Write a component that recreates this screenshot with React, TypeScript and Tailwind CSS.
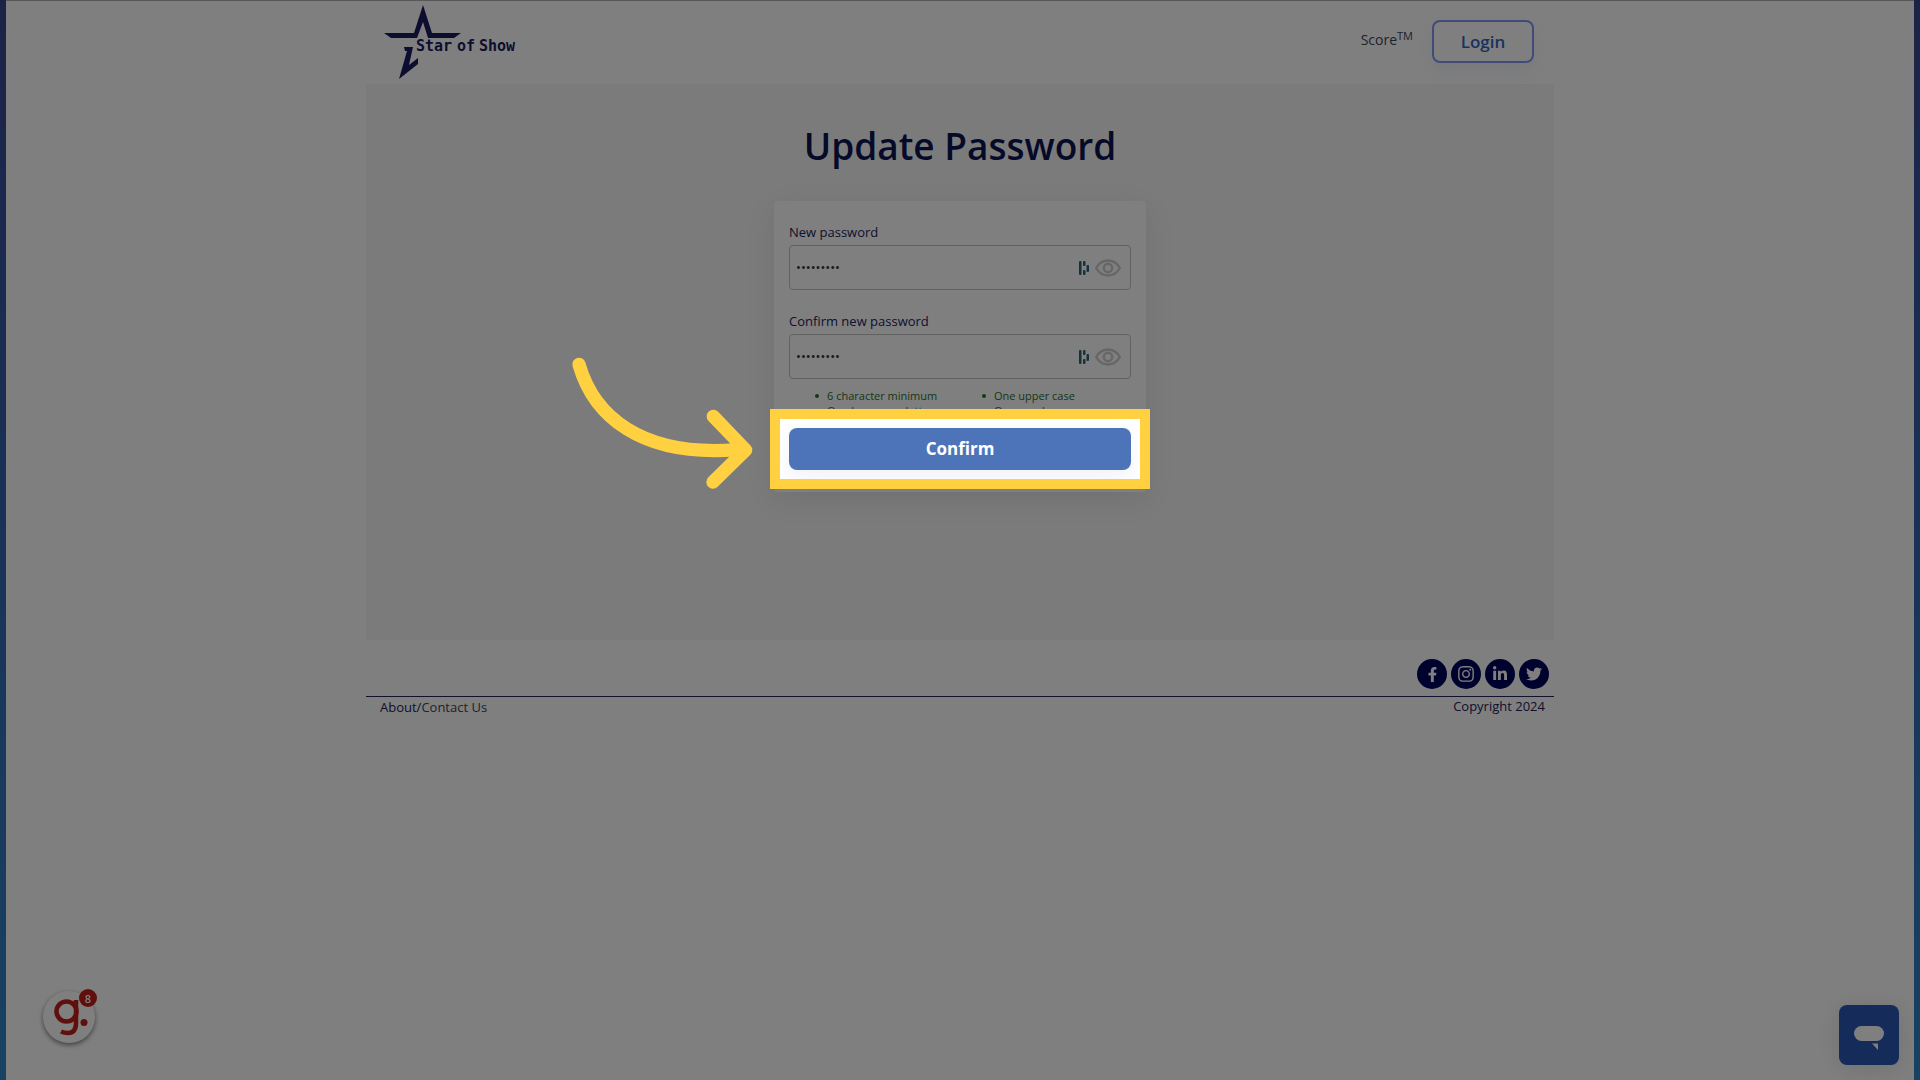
import { useState } from "react";
import { FaFacebookF, FaInstagram, FaLinkedinIn, FaTwitter } from "react-icons/fa";

const socials = [
  { label: "Facebook", Icon: FaFacebookF, size: 15 },
  { label: "Instagram", Icon: FaInstagram, size: 18 },
  { label: "LinkedIn", Icon: FaLinkedinIn, size: 16 },
  { label: "Twitter", Icon: FaTwitter, size: 16 },
];

const rules = ["6 character minimum", "One upper case", "One lowercase letter", "One number"];

function Logo() {
  return (
    <svg width="140" height="76" viewBox="0 0 140 76" role="img" aria-label="Star of Show">
      <g fill="#1b1b5e">
        <path d="M0 28H30L39 0L48 28H77L70 33H44L39 17L33 33H7Z" />
        <path d="M20 42H29L25 60L34 53V59L15 74L23 46H21Z" />
      </g>
      <g
        fill="#1b1b5e"
        fontFamily="'DejaVu Sans Mono', 'Liberation Mono', monospace"
        fontSize="15"
        fontWeight="700"
      >
        <text x="32" y="46">Star</text>
        <text x="73" y="46">of</text>
        <text x="95" y="46">Show</text>
      </g>
    </svg>
  );
}

function ManagerIcon() {
  return (
    <svg width="10" height="14" viewBox="0 0 10 14" fill="#2a6478" aria-hidden="true">
      <rect x="0" y="0" width="2.500" height="14" rx="1" />
      <rect x="4" y="0" width="2.500" height="5" rx="1" />
      <rect x="4" y="9" width="2.500" height="5" rx="1" />
      <rect x="7.500" y="4" width="2.500" height="7" rx="1" />
    </svg>
  );
}

function EyeIcon() {
  return (
    <svg width="26" height="18" viewBox="0 0 26 18" fill="none" stroke="#cdcdcd" strokeWidth="2.400" aria-hidden="true">
      <path d="M1.200 9C4 4 8 1.500 13 1.500S22 4 24.800 9C22 14 18 16.500 13 16.500S4 14 1.200 9Z" strokeLinejoin="round" />
      <circle cx="13" cy="9" r="4.200" />
    </svg>
  );
}

type PasswordFieldProps = {
  id: string;
  label: string;
};

function PasswordField({ id, label }: PasswordFieldProps) {
  const [value, setValue] = useState("passw0rdA");
  const [visible, setVisible] = useState(false);

  return (
    <div>
      <label htmlFor={id} className="block text-[13px] leading-[18px] text-[#22225c]">
        {label}
      </label>
      <div className="mt-1 flex h-[45px] items-center rounded border border-[#c4c4c4] bg-white pr-[9px] pl-1.5">
        <input
          id={id}
          type={visible ? "text" : "password"}
          value={value}
          onChange={(e) => setValue(e.target.value)}
          className="min-w-0 flex-1 bg-transparent text-[13px] text-[#333] outline-none"
        />
        <ManagerIcon />
        <button
          type="button"
          aria-label="Show password"
          onClick={() => setVisible(!visible)}
          className="ml-[6px]"
        >
          <EyeIcon />
        </button>
      </div>
    </div>
  );
}

// Dims the whole page and leaves a bright window around its parent
function Spotlight() {
  return (
    <div className="pointer-events-none absolute -inset-[19px] z-50 border-[10px] border-[#ffd140] shadow-[0_0_0_3000px_rgba(0,0,0,0.5)]">
      <svg
        className="absolute -top-[79px] -left-[220px]"
        width="220"
        height="160"
        viewBox="0 0 660 480"
        fill="none"
        stroke="#ffd140"
        strokeWidth="40"
        strokeLinecap="round"
        strokeLinejoin="round"
        aria-hidden="true"
      >
        <path d="M57 73C100 225 240 352 530 329" />
        <path d="M460 229L557 330L459 426" />
      </svg>
    </div>
  );
}

export default function App() {
  return (
    <div className="min-h-screen bg-linear-to-b from-[#38468e] via-[#3464b0] to-[#3084c8] px-1.5 font-['Open_Sans','Noto_Sans',sans-serif]">
      <div className="min-h-screen border-t border-[#b0b0b0] bg-white">
        <div className="mx-auto max-w-[1188px]">
          <header className="flex h-[83px] items-start justify-between pr-5 pl-[18px]">
            <a href="#home" className="pt-1">
              <Logo />
            </a>
            <nav className="flex items-start gap-[19px] pt-[19px]">
              <a href="#score" className="pt-[10px] text-[14px] leading-5 text-[#3c4658]">
                Score<sup className="text-[11px]">TM</sup>
              </a>
              <button
                type="button"
                className="h-[43px] w-[102px] rounded-lg border-2 border-[#8494f4] text-[17px] font-semibold text-[#3464bc] shadow-[0_8px_20px_rgba(80,100,180,0.08)]"
              >
                Login
              </button>
            </nav>
          </header>

          <main className="h-[556px] bg-[#f6f6f6] pt-9">
            <h1 className="text-center text-[37px] leading-[52px] font-semibold text-[#0a1450]">Update Password</h1>
            <form
              className="mx-auto mt-[29px] w-[372px] rounded bg-white px-[15px] py-[22px] shadow-[0_8px_28px_rgba(60,60,100,0.10)]"
              onSubmit={(e) => e.preventDefault()}
            >
              <div className="flex flex-col gap-[22px]">
                <PasswordField id="new-password" label="New password" />
                <PasswordField id="confirm-password" label="Confirm new password" />
              </div>
              <ul className="mt-[9px] grid grid-cols-[167px_1fr] pl-[26px] text-[11px] leading-[15px] text-[#2a7030]">
                {rules.map((rule) => (
                  <li
                    key={rule}
                    className="flex items-center gap-2 before:size-1 before:rounded-full before:bg-[#2a7030]"
                  >
                    {rule}
                  </li>
                ))}
              </ul>
              <div className="relative mt-[10px]">
                <button
                  type="submit"
                  className="h-[42px] w-full rounded-lg bg-[#4d74b9] text-[17px] font-bold text-white shadow-[0_8px_20px_rgba(80,100,180,0.08)]"
                >
                  Confirm
                </button>
                <Spotlight />
              </div>
            </form>
          </main>

          <footer className="pt-[19px] text-[13px] leading-[18px] text-[#22225c]">
            <div className="flex justify-end gap-1 pr-[5px] pb-[7px]">
              {socials.map(({ label, Icon, size }) => (
                <a
                  key={label}
                  href={`#${label.toLowerCase()}`}
                  aria-label={label}
                  className="flex size-[30px] items-center justify-center rounded-full bg-[#00045c] text-white"
                >
                  <Icon size={size} />
                </a>
              ))}
            </div>
            <div className="flex justify-between border-t border-[#22225c] pr-[9px] pl-3.5">
              <p className="pt-px">
                <a href="#about">About/</a>
                <a href="#contact" className="text-[#3c4658]">Contact Us</a>
              </p>
              <p>Copyright 2024</p>
            </div>
          </footer>
        </div>
      </div>

      <button
        type="button"
        aria-label="Guides, 8 new"
        className="fixed bottom-[37px] left-[43px] size-[52px] rounded-full bg-white shadow-[0_2px_5px_rgba(0,0,0,0.5)]"
      >
        <svg width="52" height="52" viewBox="0 0 52 52" fill="none" stroke="#c02018" strokeWidth="4.500" aria-hidden="true">
          <circle cx="23.500" cy="20.500" r="10" />
          <path d="M33 9V32C33 39 30 42 25 42C22 42 20 41.500 18 40.500" />
          <circle cx="41" cy="31.500" r="3.500" fill="#c02018" stroke="none" />
        </svg>
        <span className="absolute -top-[2px] -right-[2px] flex size-[18px] items-center justify-center rounded-full bg-[#c02018] text-[11px] leading-none font-semibold text-white">
          8
        </span>
      </button>

      <button
        type="button"
        aria-label="Open chat"
        className="fixed right-[21px] bottom-[15px] flex size-[60px] items-center justify-center rounded-lg bg-[#2a58b4] shadow-[0_4px_24px_rgba(0,0,0,0.12)]"
      >
        <svg width="60" height="60" viewBox="0 0 60 60" fill="#fff" aria-hidden="true">
          <rect x="15" y="21" width="30" height="15" rx="7.500" />
          <path d="M33 38.500H39V45Z" />
        </svg>
      </button>
    </div>
  );
}
